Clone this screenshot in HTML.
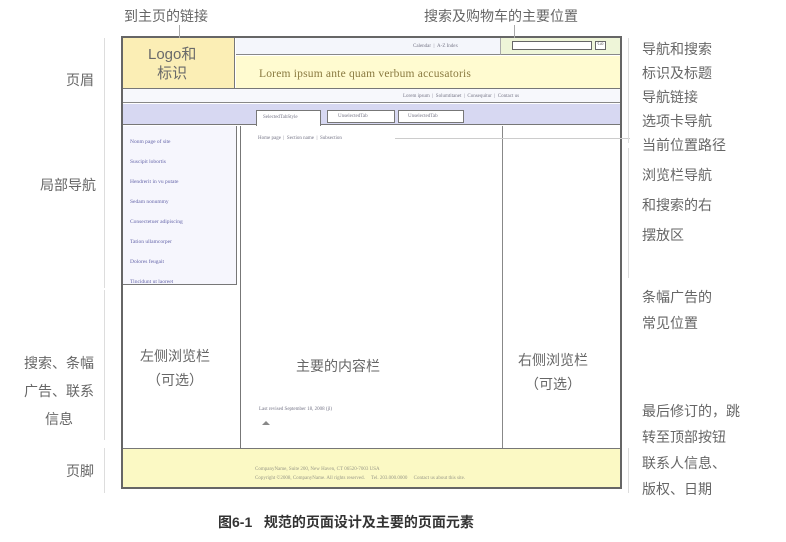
<!DOCTYPE html>
<html><head><meta charset="utf-8"><style>
*{margin:0;padding:0;box-sizing:border-box}
body{width:786px;height:542px;background:#fff;position:relative;overflow:hidden;font-family:"Liberation Serif","Noto Serif CJK SC",serif;color:#555}
.a{position:absolute}
.cn{font-family:"Liberation Sans","Noto Sans CJK SC",sans-serif;color:#666;font-size:14px}
.sm{font-size:5px;color:#778}
.bx{border:1px solid #777}
.ln{background:#bbb}
</style></head><body>
<!-- outer frame -->
<div class="a" style="left:121px;top:36px;width:501px;height:453px;border:2px solid #666"></div>
<div class="a" style="left:123px;top:38px;width:112px;height:50px;background:#fbeeb5;border-right:1px solid #777"></div>
<div class="a" style="left:236px;top:38px;width:264px;height:17px;background:#f4f6fb;border-bottom:1px solid #888"></div>
<div class="a" style="left:500px;top:38px;width:120px;height:17px;background:#eef5d8;border-left:1px solid #aaa;border-bottom:1px solid #888"></div>
<div class="a" style="left:512px;top:41px;width:80px;height:9px;border:1px solid #666;background:#fff"></div>
<div class="a" style="left:595px;top:41px;width:11px;height:9px;border:1px solid #666;background:#fff;font-size:5px;text-align:center">Go</div>
<div class="a sm" style="left:413px;top:44px">Calendar &nbsp;| &nbsp;A-Z Index</div>
<div class="a" style="left:236px;top:56px;width:384px;height:32px;background:#fffbd0"></div>
<div class="a" style="left:123px;top:88px;width:497px;height:1px;background:#777"></div>
<div class="a cn" style="left:148px;top:45px;font-size:15px;line-height:19px;text-align:center;color:#6a6a6a">Logo和<br>标识</div>
<div class="a" style="left:259px;top:68px;font-size:11.5px;color:#8a7a40;letter-spacing:.2px">Lorem ipsum ante quam verbum accusatoris</div>
<div class="a" style="left:123px;top:89px;width:497px;height:14px;background:#f7f8fc;border-bottom:1px solid #888"></div>
<div class="a sm" style="left:403px;top:94px">Lorem ipsum &nbsp;| &nbsp;Solumtitanet &nbsp;| &nbsp;Consequitur &nbsp;| &nbsp;Contact us</div>
<div class="a" style="left:123px;top:104px;width:497px;height:21px;background:#d7d8f2;border-bottom:1px solid #777"></div>
<div class="a bx sm" style="left:256px;top:110px;width:65px;height:16px;background:#fff;padding:4px 6px;border-bottom:none">SelectedTabStyle</div>
<div class="a bx sm" style="left:327px;top:110px;width:68px;height:13px;background:#fff;padding:3px 10px">UnselectedTab</div>
<div class="a bx sm" style="left:398px;top:110px;width:66px;height:13px;background:#fff;padding:3px 9px">UnselectedTab</div>
<!-- left nav -->
<div class="a" style="left:123px;top:126px;width:114px;height:159px;background:#f6f6fd;border-right:1px solid #777;border-bottom:1px solid #777"></div>
<div class="a" style="left:240px;top:126px;width:1px;height:322px;background:#777"></div>
<div class="a" style="left:502px;top:126px;width:1px;height:322px;background:#888"></div>
<div class="a sm" style="left:130px;top:132px;line-height:20px;color:#66a;font-size:5.5px">Nonm page of site<br>Suscipit lobortis<br>Hendrerit in vu putate<br>Sedam nonummy<br>Consectetuer adipiscing<br>Tation ullamcorper<br>Dolores feugait<br>Tincidunt ut laoreet</div>
<div class="a sm" style="left:258px;top:136px">Home page &nbsp;| &nbsp;Section name &nbsp;| &nbsp;Subsection</div>
<div class="a" style="left:395px;top:138px;width:235px;height:1px;background:#ccc"></div>
<div class="a cn" style="left:140px;top:344px;line-height:24px;text-align:center">左侧浏览栏<br>（可选）</div>
<div class="a cn" style="left:296px;top:356px">主要的内容栏</div>
<div class="a cn" style="left:518px;top:348px;line-height:24px;text-align:center">右侧浏览栏<br>（可选）</div>
<div class="a sm" style="left:259px;top:407px">Last revised September 18, 2008 (jl)</div>
<div class="a" style="left:262px;top:421px;width:0;height:0;border-left:4px solid transparent;border-right:4px solid transparent;border-bottom:4px solid #888"></div>
<div class="a" style="left:123px;top:448px;width:497px;height:39px;background:#fbf9c4;border-top:1px solid #777"></div>
<div class="a sm" style="left:255px;top:465px;line-height:9px;color:#998">CompanyName, Suite 200, New Haven, CT 06520-7003 USA<br>Copyright ©2008, CompanyName. All rights reserved. &nbsp; &nbsp; Tel. 203.000.0000 &nbsp; &nbsp; Contact us about this site.</div>
<!-- top labels -->
<div class="a cn" style="left:124px;top:6px">到主页的链接</div>
<div class="a" style="left:179px;top:25px;width:1px;height:13px;background:#aaa"></div>
<div class="a cn" style="left:424px;top:6px">搜索及购物车的主要位置</div>
<div class="a" style="left:514px;top:25px;width:1px;height:13px;background:#aaa"></div>
<!-- left labels -->
<div class="a cn" style="left:66px;top:70px">页眉</div>
<div class="a cn" style="left:40px;top:175px">局部导航</div>
<div class="a cn" style="left:24px;top:349px;line-height:28px;text-align:center">搜索、条幅<br>广告、联系<br>信息</div>
<div class="a cn" style="left:66px;top:461px">页脚</div>
<div class="a ln" style="left:104px;top:38px;width:1px;height:250px;background:#ddd"></div>
<div class="a ln" style="left:104px;top:290px;width:1px;height:150px;background:#ddd"></div>
<div class="a ln" style="left:104px;top:448px;width:1px;height:45px;background:#ddd"></div>
<!-- right labels -->
<div class="a cn" style="left:642px;top:37px;line-height:24px">导航和搜索<br>标识及标题<br>导航链接<br>选项卡导航<br>当前位置路径</div>
<div class="a cn" style="left:642px;top:160px;line-height:30px">浏览栏导航<br>和搜索的右<br>摆放区</div>
<div class="a cn" style="left:642px;top:284px;line-height:26px">条幅广告的<br>常见位置</div>
<div class="a cn" style="left:642px;top:398px;line-height:26px">最后修订的，跳<br>转至顶部按钮<br>联系人信息、<br>版权、日期</div>
<div class="a" style="left:628px;top:38px;width:1px;height:105px;background:#ddd"></div>
<div class="a" style="left:628px;top:148px;width:1px;height:130px;background:#ddd"></div>
<div class="a" style="left:628px;top:448px;width:1px;height:45px;background:#ddd"></div>
<div class="a" style="left:218px;top:512px;font-family:'Liberation Sans','Noto Sans CJK SC',sans-serif;font-weight:bold;font-size:14px;color:#333">图6-1 &nbsp;&nbsp;规范的页面设计及主要的页面元素</div>
</body></html>
